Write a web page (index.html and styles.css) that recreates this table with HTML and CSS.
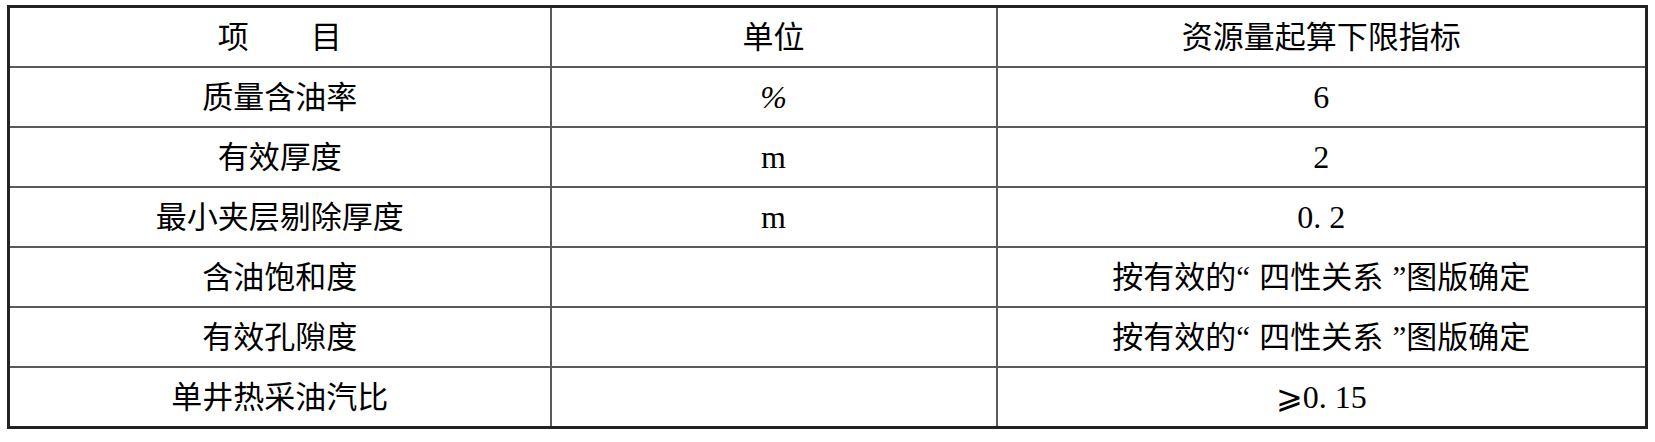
FILE: index.html
```html
<!DOCTYPE html>
<html lang="zh-CN">
<head>
<meta charset="utf-8">
<title>资源量起算下限指标</title>
<link rel="stylesheet" href="styles.css">
</head>
<body>
<table class="spec">
  <colgroup>
    <col class="c1">
    <col class="c2">
    <col class="c3">
  </colgroup>
  <tbody>
    <tr><td>项　　目</td><td>单位</td><td>资源量起算下限指标</td></tr>
    <tr><td>质量含油率</td><td class="pct" lang="en">%</td><td class="num" lang="en">6</td></tr>
    <tr><td>有效厚度</td><td class="num" lang="en">m</td><td class="num" lang="en">2</td></tr>
    <tr><td>最小夹层剔除厚度</td><td class="num" lang="en">m</td><td class="num" lang="en">0. 2</td></tr>
    <tr><td>含油饱和度</td><td></td><td>按有效的<span class="q ql">“</span>四性关系<span class="q qr">”</span>图版确定</td></tr>
    <tr><td>有效孔隙度</td><td></td><td>按有效的<span class="q ql">“</span>四性关系<span class="q qr">”</span>图版确定</td></tr>
    <tr><td>单井热采油汽比</td><td></td><td class="num" lang="en">⩾0. 15</td></tr>
  </tbody>
</table>
</body>
</html>
```

FILE: styles.css
```css
html, body {
  margin: 0;
  padding: 0;
  background: #ffffff;
}

body {
  padding: 5px 0 0 7px;
}

.spec {
  border-collapse: collapse;
  table-layout: fixed;
  width: 1638px;
  border: 3px solid #222222;
  font-family: "Liberation Serif", "Noto Sans CJK SC", serif;
  font-size: 31px;
  color: #000000;
}

.c1 { width: 542px; }
.c2 { width: 446px; }
.c3 { width: 650px; }

.spec td {
  border: 2px solid #5a5a5a;
  height: 58px;
  padding: 0;
  text-align: center;
  vertical-align: middle;
  line-height: 1;
}

.spec td:first-child {
  border-left-color: #222222;
}

.num {
  font-family: "Liberation Serif", serif;
  font-size: 32px;
}

.pct {
  font-family: "Liberation Serif", serif;
  font-style: italic;
  font-size: 32px;
}

.q {
  font-family: "Liberation Serif", serif;
  display: inline-block;
  width: 23px;
}

.ql {
  text-align: left;
}

.qr {
  text-align: right;
}
```
